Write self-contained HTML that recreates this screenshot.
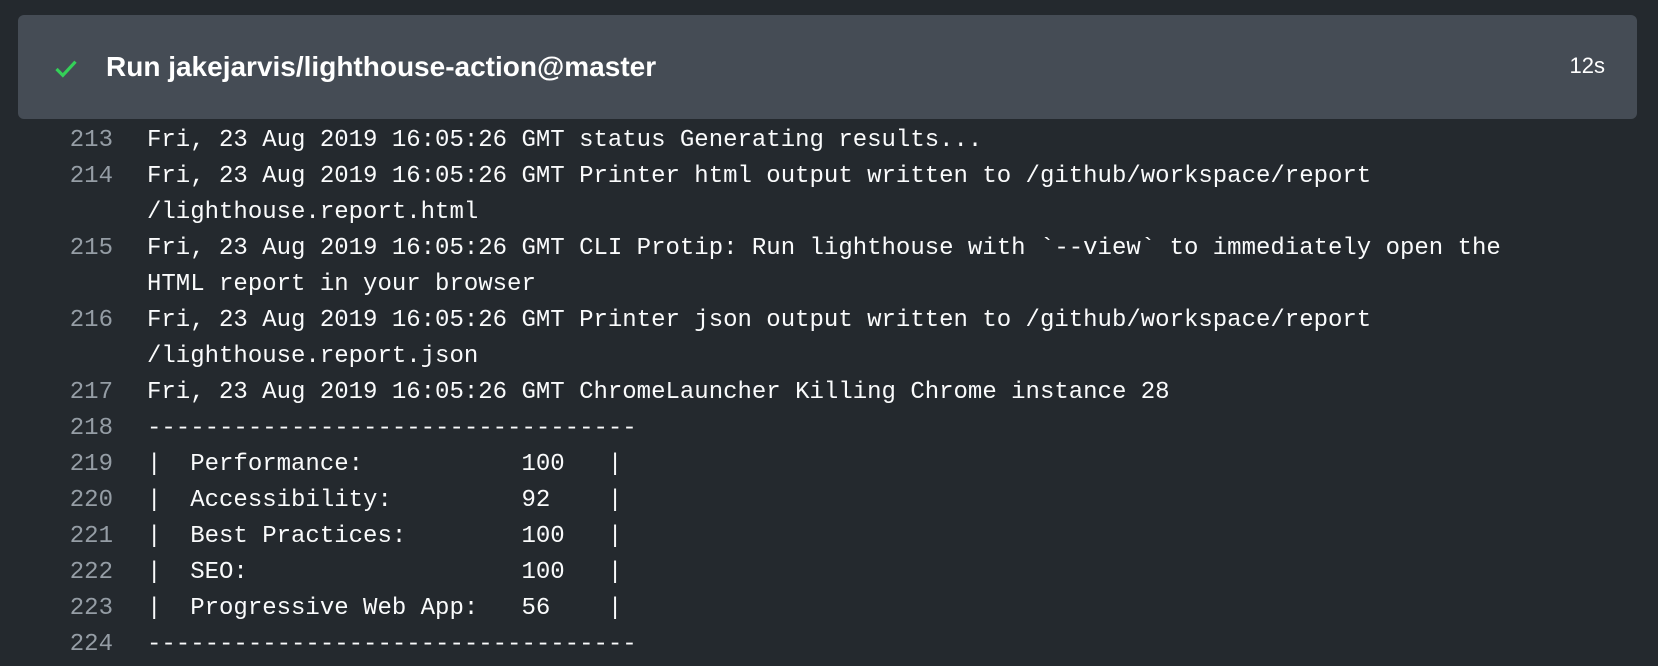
<!DOCTYPE html>
<html><head><meta charset="utf-8"><style>
html,body{margin:0;padding:0;background:#24292e;width:1658px;height:666px;overflow:hidden}
.hdr{position:absolute;left:18px;top:15px;width:1619px;height:104px;background:#454c55;border-radius:6px;}
.hdr .t{position:absolute;left:88px;top:36px;font:bold 28px "Liberation Sans",sans-serif;color:#fff}
.hdr .d{position:absolute;right:32px;top:38px;font:22px "Liberation Sans",sans-serif;color:#fff}
.hdr svg{position:absolute;left:36px;top:44px}
.log{position:absolute;left:0;top:123px;font:24px/36px "Liberation Mono",monospace;color:#fafbfc}
.r{position:relative;height:36px}
.n{position:absolute;left:0;width:113px;text-align:right;color:#959da5}
.c{position:absolute;left:147px;white-space:pre}
</style></head><body>
<div class="hdr"><svg width="24" height="19" viewBox="0 0 22 18"><path d="M2 9.5l6 6L20 2.5" fill="none" stroke="#34d058" stroke-width="3"/></svg><div class="t">Run jakejarvis/lighthouse-action@master</div><div class="d">12s</div></div>
<div class="log"><div class="r"><span class="n">213</span><span class="c">Fri, 23 Aug 2019 16:05:26 GMT status Generating results...</span></div><div class="r"><span class="n">214</span><span class="c">Fri, 23 Aug 2019 16:05:26 GMT Printer html output written to /github/workspace/report</span></div><div class="r"><span class="c">/lighthouse.report.html</span></div><div class="r"><span class="n">215</span><span class="c">Fri, 23 Aug 2019 16:05:26 GMT CLI Protip: Run lighthouse with `--view` to immediately open the</span></div><div class="r"><span class="c">HTML report in your browser</span></div><div class="r"><span class="n">216</span><span class="c">Fri, 23 Aug 2019 16:05:26 GMT Printer json output written to /github/workspace/report</span></div><div class="r"><span class="c">/lighthouse.report.json</span></div><div class="r"><span class="n">217</span><span class="c">Fri, 23 Aug 2019 16:05:26 GMT ChromeLauncher Killing Chrome instance 28</span></div><div class="r"><span class="n">218</span><span class="c">----------------------------------</span></div><div class="r"><span class="n">219</span><span class="c">|  Performance:           100   |</span></div><div class="r"><span class="n">220</span><span class="c">|  Accessibility:         92    |</span></div><div class="r"><span class="n">221</span><span class="c">|  Best Practices:        100   |</span></div><div class="r"><span class="n">222</span><span class="c">|  SEO:                   100   |</span></div><div class="r"><span class="n">223</span><span class="c">|  Progressive Web App:   56    |</span></div><div class="r"><span class="n">224</span><span class="c">----------------------------------</span></div></div>
</body></html>
